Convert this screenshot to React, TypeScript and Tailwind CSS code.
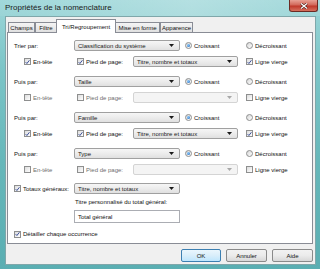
import React from "react";

const FONT = { fontFamily: '"Liberation Sans", Arial, sans-serif' };

function Check({ checked }: { checked?: boolean }) {
  return (
    <span className="w-[7px] h-[7px] border border-[#8e8f8f] bg-[linear-gradient(135deg,#dcdcdc,#ffffff)] flex items-center justify-center shrink-0">
      {checked && (
        <svg width="6" height="6" viewBox="0 0 6 6">
          <path d="M0.8 3.2 L2.3 4.8 L5.3 0.9" fill="none" stroke="#2a3f8f" strokeWidth="1.1" />
        </svg>
      )}
    </span>
  );
}

function Radio({ checked }: { checked?: boolean }) {
  return (
    <span className="w-[7px] h-[7px] rounded-full border border-[#8e8f8f] bg-[linear-gradient(135deg,#d6d6d6,#ffffff)] flex items-center justify-center shrink-0">
      {checked && (
        <span className="w-[3px] h-[3px] rounded-full bg-[radial-gradient(circle_at_35%_35%,#8fd0ff,#1b5fb8)]" />
      )}
    </span>
  );
}

function Arrow({ disabled }: { disabled?: boolean }) {
  return (
    <svg width="5" height="3" viewBox="0 0 5 3" className="shrink-0">
      <path d="M0 0 L5 0 L2.5 3 Z" fill={disabled ? "#a8a8a8" : "#1a1a1a"} />
    </svg>
  );
}

function Select({ value, width, disabled }: { value?: string; width: string; disabled?: boolean }) {
  return (
    <div
      className={`${width} h-[11px] rounded-[2px] border flex items-center justify-between pl-[3px] pr-[5px] shrink-0 ${
        disabled
          ? "border-[#d4d4d4] bg-[#f4f4f4]"
          : "border-[#a0a0a0] bg-[linear-gradient(180deg,#f6f6f6_0%,#ececec_50%,#e0e0e0_100%)]"
      }`}
    >
      <span className="text-[6px] leading-none text-[#1a1a1a] whitespace-nowrap">{value}</span>
      <Arrow disabled={disabled} />
    </div>
  );
}

function MainRow({ label, value }: { label: string; value: string }) {
  return (
    <div className="flex items-center h-[11px]">
      <span className="w-[60px]">{label}</span>
      <Select value={value} width="w-[106px]" />
      <div className="ml-[5px] w-[61px] flex items-center gap-[2px]">
        <Radio checked />
        <span>Croissant</span>
      </div>
      <div className="flex items-center gap-[2px]">
        <Radio />
        <span>Décroissant</span>
      </div>
    </div>
  );
}

function SubRow({ checked, value }: { checked?: boolean; value?: string }) {
  const muted = checked ? "" : "text-[#6d6d6d]";
  return (
    <div className="flex items-center h-[11px] mt-[5px]">
      <div className="ml-[10px] w-[53px] flex items-center gap-[2px]">
        <Check checked={checked} />
        <span className={muted}>En-tête</span>
      </div>
      <div className="w-[56px] flex items-center gap-[2px]">
        <Check checked={checked} />
        <span className={muted}>Pied de page:</span>
      </div>
      <Select value={value} width="w-[105px]" disabled={!checked} />
      <div className="ml-[8px] flex items-center gap-[2px]">
        <Check checked={checked} />
        <span>Ligne vierge</span>
      </div>
    </div>
  );
}

function Tab({ label, active, w }: { label: string; active?: boolean; w: string }) {
  return (
    <div
      className={`${w} flex items-center justify-center border border-b-0 border-[#898c95] text-[6px] leading-none ${
        active
          ? "h-[14px] bg-white -mb-px z-10 relative -mx-px"
          : "h-[10px] bg-[linear-gradient(180deg,#f4f4f4,#e0e0e0)]"
      }`}
    >
      {label}
    </div>
  );
}

function Button({ label, primary }: { label: string; primary?: boolean }) {
  return (
    <div
      className={`h-[13px] flex items-center justify-center rounded-[2px] border text-[6px] leading-none ${
        primary
          ? "w-[40px] border-[#3c7fb1] bg-[linear-gradient(180deg,#eaf6fd,#d9eefa_50%,#bee6fd)]"
          : "w-[41px] border-[#8a8a8a] bg-[linear-gradient(180deg,#f2f2f2,#ebebeb_50%,#d8d8d8)]"
      }`}
    >
      {label}
    </div>
  );
}

export default function App() {
  return (
    <div
      className="w-[320px] h-[269px] overflow-hidden flex flex-col bg-[linear-gradient(180deg,#9cd6d8_0%,#7cc5c8_25%,#66b7ba_60%,#5aaeb2_100%)] text-[#111]"
      style={FONT}
    >
      <div className="h-[16px] flex items-start relative bg-[linear-gradient(90deg,rgba(255,255,255,0.05),rgba(255,255,255,0.25)_60%,rgba(255,255,255,0.1))]">
        <span className="pl-[5px] pt-[4px] text-[8px] leading-none text-[#1b1b1b]">Propriétés de la nomenclature</span>
        <div className="absolute right-[2px] top-0 w-[29px] h-[12px] rounded-b-[3px] border border-t-0 border-[#6b2a23] bg-[linear-gradient(180deg,#e8a195_0%,#d2685a_45%,#c0392b_55%,#d6705e_100%)] flex items-center justify-center">
          <svg width="8" height="6" viewBox="0 0 8 6">
            <path d="M1 0.5 L7 5.5 M7 0.5 L1 5.5" stroke="#4a1a14" strokeWidth="2.4" />
            <path d="M1 0.5 L7 5.5 M7 0.5 L1 5.5" stroke="#ffffff" strokeWidth="1.3" />
          </svg>
        </div>
      </div>

      <div className="ml-[5px] mr-[4px] mb-[4px] flex-1 bg-[#f0f0f0] border border-[#7fa7aa] flex flex-col">
        <div className="flex items-end pl-[2px] pt-[1px] h-[15px]">
          <Tab label="Champs" w="w-[27px]" />
          <Tab label="Filtre" w="w-[22px]" />
          <Tab label="Tri/Regroupement" w="w-[60px]" active />
          <Tab label="Mise en forme" w="w-[45px]" />
          <Tab label="Apparence" w="w-[33px]" />
        </div>

        <div className="ml-[1px] w-[306px] h-[212px] border border-[#898c95] bg-white text-[6px] leading-none flex flex-col pt-[7px] pl-[6px]">
          <MainRow label="Trier par:" value="Classification du système" />
          <SubRow checked value="Titre, nombre et totaux" />

          <div className="mt-[9px]">
            <MainRow label="Puis par:" value="Taille" />
          </div>
          <SubRow />

          <div className="mt-[9px]">
            <MainRow label="Puis par:" value="Famille" />
          </div>
          <SubRow checked value="Titre, nombre et totaux" />

          <div className="mt-[9px]">
            <MainRow label="Puis par:" value="Type" />
          </div>
          <SubRow />

          <div className="flex items-center h-[11px] mt-[8px]">
            <div className="w-[60px] flex items-center gap-[2px]">
              <Check checked />
              <span>Totaux généraux:</span>
            </div>
            <Select value="Titre, nombre et totaux" width="w-[106px]" />
          </div>

          <div className="h-[8px] mt-[4px] ml-[61px] flex items-center">Titre personnalisé du total général:</div>

          <div className="mt-[4px] ml-[60px] w-[106px] h-[13px] border border-[#abadb3] bg-white flex items-center pl-[3px]">
            Total général
          </div>

          <div className="mt-[7px] h-[8px] flex items-center gap-[2px]">
            <Check checked />
            <span>Détailler chaque occurrence</span>
          </div>
        </div>

        <div className="flex justify-end gap-[5px] mt-[5px] mr-[2px]">
          <Button label="OK" primary />
          <Button label="Annuler" />
          <Button label="Aide" />
        </div>
      </div>
    </div>
  );
}
